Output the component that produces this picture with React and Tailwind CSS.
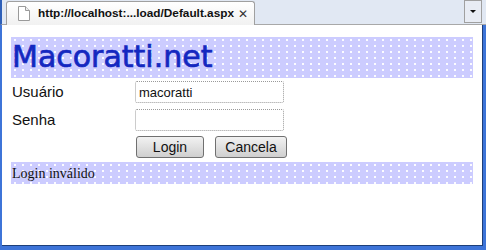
import React from 'react';

const dots =
  'bg-[#ccccff] bg-[radial-gradient(circle,#ffffff_0.7px,transparent_0.8px)] bg-[length:8px_6px]';

function PageIcon() {
  return (
    <svg width="12" height="15" viewBox="0 0 12 15" className="shrink-0">
      <path d="M0.5 0.5h7l4 4v10h-11z" fill="#ffffff" stroke="#9a9a9a" />
      <path d="M7.5 0.5v4h4" fill="#eeeeee" stroke="#9a9a9a" />
    </svg>
  );
}

export default function App() {
  return (
    <div className="w-[486px] h-[250px] overflow-hidden bg-[#3d74d8] flex flex-col">
      {/* tab strip */}
      <div className="h-[25px] shrink-0 flex items-end bg-[#e1e8f3] border-b border-[#a8a8a8] pl-[4px] pr-[4px] border-l-2 border-l-[#2d5fb8]">
        <div className="h-[24px] w-[249px] flex items-center gap-[8px] pl-[11px] bg-gradient-to-b from-[#ffffff] to-[#f1f1f1] border border-b-0 border-[#a0a0a0] rounded-t-[3px] -mb-px">
          <PageIcon />
          <span
            className="text-[11.8px] font-bold text-[#111111] whitespace-nowrap"
            style={{ fontFamily: '"Liberation Sans", Arial, sans-serif' }}
          >
            http://localhost:...load/Default.aspx
          </span>
          <span className="text-[12px] text-[#333333] -ml-[4px]" style={{ fontFamily: '"DejaVu Sans", sans-serif' }}>
            ✕
          </span>
        </div>
        <div className="flex-1" />
        <div className="w-[18px] h-[23px] mb-px border border-[#a0a0a0] bg-[#e8ecf4] flex items-center justify-center">
          <span className="block w-0 h-0 border-l-[3px] border-r-[3px] border-t-[3px] border-l-transparent border-r-transparent border-t-[#111111]" />
        </div>
      </div>

      {/* page */}
      <div className="flex-1 ml-[2px] mr-[3px] mb-[4px] bg-white border-r border-b border-[#1d3f7a] pt-[12px] pl-[9px] pr-[9px]">
        <div className={`${dots} h-[41px] flex items-center pl-[1px]`}>
          <span
            className="text-[30px] leading-none text-[#1428c0] pb-[2px] [-webkit-text-stroke:0.7px_#1428c0]"
            style={{ fontFamily: '"DejaVu Sans", Verdana, sans-serif' }}
          >
            Macoratti.net
          </span>
        </div>

        <div className="grid grid-cols-[124px_auto] items-center gap-y-[5px] mt-[3px]" style={{ fontFamily: '"Liberation Sans", Arial, sans-serif' }}>
          <span className="text-[15px] text-[#111111] pl-[1px]">Usuário</span>
          <div className="w-[149px] h-[22px] border border-dotted border-[#9a9a9a] rounded-[2px] flex items-center pl-[3px] text-[13px] text-[#111111]">
            macoratti
          </div>
          <span className="text-[15px] text-[#111111] pl-[1px]">Senha</span>
          <div className="w-[149px] h-[22px] border border-dotted border-[#9a9a9a] rounded-[2px]" />
          <span />
          <div className="flex gap-[11px] pl-[1px]">
            <button className="w-[68px] h-[22px] border border-[#707070] rounded-[3px] bg-gradient-to-b from-[#f2f2f2] to-[#cfcfcf] text-[14px] text-[#111111] leading-none">
              Login
            </button>
            <button className="w-[72px] h-[22px] border border-[#707070] rounded-[3px] bg-gradient-to-b from-[#f2f2f2] to-[#cfcfcf] text-[14px] text-[#111111] leading-none">
              Cancela
            </button>
          </div>
        </div>

        <div className={`${dots} h-[22px] mt-[4px] flex items-center pl-[1px]`}>
          <span className="text-[14px] text-[#111111]" style={{ fontFamily: '"Liberation Serif", "Times New Roman", serif' }}>
            Login inválido
          </span>
        </div>
      </div>
    </div>
  );
}
